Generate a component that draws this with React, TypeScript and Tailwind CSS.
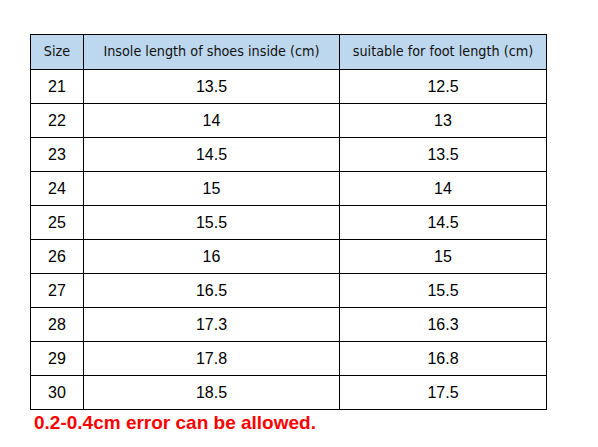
const rows = [
  ['21', '13.5', '12.5'],
  ['22', '14', '13'],
  ['23', '14.5', '13.5'],
  ['24', '15', '14'],
  ['25', '15.5', '14.5'],
  ['26', '16', '15'],
  ['27', '16.5', '15.5'],
  ['28', '17.3', '16.3'],
  ['29', '17.8', '16.8'],
  ['30', '18.5', '17.5'],
];

export default function App() {
  return (
    <div className="w-[598px] h-[447px] bg-white pt-[34px] pl-[30px]">
      <table className="border-collapse table-fixed w-[517px]">
        <colgroup>
          <col className="w-[53px]" />
          <col className="w-[256px]" />
          <col className="w-[207px]" />
        </colgroup>
        <thead>
          <tr className="h-[35px] bg-[#bdd7ee] text-[14.25px] text-[#111] font-['DejaVu_Sans_Condensed','DejaVu_Sans',sans-serif]">
            <th className="border border-black font-normal text-center p-0">Size</th>
            <th className="border border-black font-normal text-center p-0">
              Insole length of shoes inside (cm)
            </th>
            <th className="border border-black font-normal text-center p-0">
              suitable for foot length (cm)
            </th>
          </tr>
        </thead>
        <tbody className="text-[16px] text-black font-['Liberation_Sans',Arial,sans-serif]">
          {rows.map((r) => (
            <tr key={r[0]} className="h-[34px]">
              {r.map((c, i) => (
                <td key={i} className="border border-black text-center p-0">
                  {c}
                </td>
              ))}
            </tr>
          ))}
        </tbody>
      </table>
      <p className="pl-[4px] mt-[1px] text-[19px] leading-[24px] font-bold text-[#ff0000] font-['Liberation_Sans',Arial,sans-serif]">
        0.2-0.4cm error can be allowed.
      </p>
    </div>
  );
}
